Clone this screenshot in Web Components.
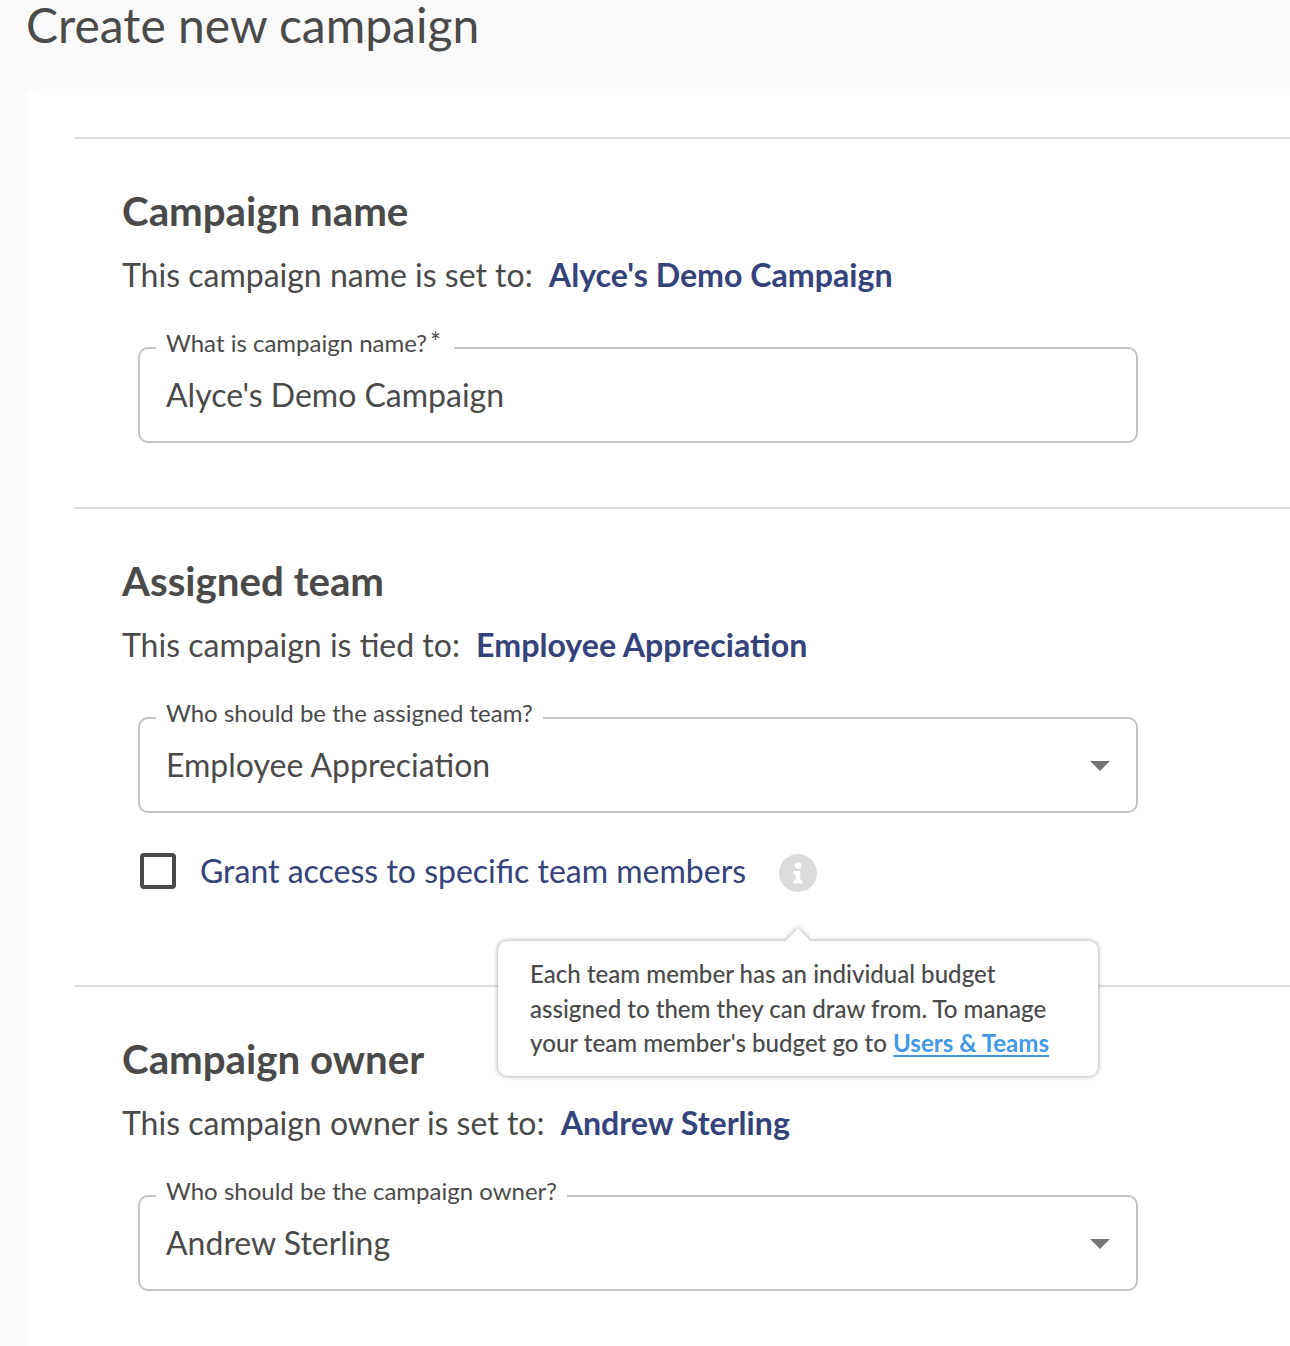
<!DOCTYPE html>
<html lang="en">
<head>
<meta charset="utf-8">
<title>Create new campaign</title>
<style>
  body {
    margin: 0;
    height: 1346px;
    overflow: hidden;
    background: #fafafa;
    color: #4a4a4a;
    font-family: Lato, sans-serif;
    font-size: 32px;
    --navy: #34437b;
    --line: #dcdcdc;
  }
</style>
</head>
<body>
<campaign-page heading="Create new campaign">
  <campaign-section heading="Campaign name" lead="This campaign name is set to:" value="Alyce's Demo Campaign">
    <outlined-field label="What is campaign name?" required>Alyce's Demo Campaign</outlined-field>
  </campaign-section>
  <campaign-section heading="Assigned team" lead="This campaign is tied to:" value="Employee Appreciation">
    <outlined-field label="Who should be the assigned team?" select>Employee Appreciation</outlined-field>
    <check-row>
      Grant access to specific team members
      <info-tip slot="info">Each team member has an individual budget assigned to them they can draw from. To manage your team member's budget go to <tip-link>Users &amp; Teams</tip-link></info-tip>
    </check-row>
  </campaign-section>
  <campaign-section heading="Campaign owner" lead="This campaign owner is set to:" value="Andrew Sterling">
    <outlined-field label="Who should be the campaign owner?" select>Andrew Sterling</outlined-field>
  </campaign-section>
</campaign-page>

<script>
class CampaignPage extends HTMLElement {
  connectedCallback() {
    this.attachShadow({ mode: 'open' }).innerHTML = `
      <style>
        :host {
          display: flex;
          flex-direction: column;
          height: 1346px;
          padding-left: 26px;
        }
        h1 {
          flex: none;
          margin: 0;
          height: 89px;
          font-size: 48px;
          font-weight: 400;
          line-height: 50px;
        }
        main {
          flex: 1;
          box-sizing: border-box;
          padding: 48px 0 0 48px;
          background: #fff;
          border-top-left-radius: 10px;
        }
      </style>
      <h1>${this.getAttribute('heading')}</h1>
      <main><slot></slot></main>
    `;
  }
}
customElements.define('campaign-page', CampaignPage);

class CampaignSection extends HTMLElement {
  connectedCallback() {
    this.attachShadow({ mode: 'open' }).innerHTML = `
      <style>
        :host {
          display: block;
          padding: 48px 0 64px 48px;
          border-top: 2px solid var(--line);
        }
        h2 {
          margin: 0;
          font-size: 40.25px;
          font-weight: 700;
          line-height: 48px;
        }
        p {
          margin: 20px 0 36px;
          line-height: 40px;
          white-space: nowrap;
        }
        b {
          margin-left: 8px;
          color: var(--navy);
          font-size: 32.15px;
          font-weight: 700;
        }
        .fields {
          width: 1000px;
          padding-left: 16px;
        }
      </style>
      <h2>${this.getAttribute('heading')}</h2>
      <p>${this.getAttribute('lead')} <b>${this.getAttribute('value')}</b></p>
      <div class="fields"><slot></slot></div>
    `;
  }
}
customElements.define('campaign-section', CampaignSection);

class OutlinedField extends HTMLElement {
  connectedCallback() {
    const mark = this.hasAttribute('required') ? '<span class="mark">*</span>' : '';
    const caret = this.hasAttribute('select')
      ? '<svg width="20" height="10" viewBox="0 0 20 10"><path d="M0 0h20L10 10z" fill="#757575"/></svg>'
      : '';
    this.attachShadow({ mode: 'open' }).innerHTML = `
      <style>
        :host { display: block; }
        fieldset {
          box-sizing: border-box;
          min-width: 0;
          margin: 0;
          padding: 0 26px 16px;
          border: 2px solid #c4c4c4;
          border-radius: 10px;
        }
        /* bottom padding lifts the text above the border line */
        legend {
          margin-left: -10px;
          padding: 0 10px 10px;
          font-size: 24px;
          line-height: 24px;
        }
        .mark {
          margin: 0 3px;
          font-size: 26px;
          line-height: 0;
        }
        .value {
          display: flex;
          align-items: center;
          justify-content: space-between;
          height: 60px;
          line-height: 60px;
        }
        svg { margin-top: 2px; }
      </style>
      <fieldset>
        <legend>${this.getAttribute('label')}${mark}</legend>
        <div class="value"><span><slot></slot></span>${caret}</div>
      </fieldset>
    `;
  }
}
customElements.define('outlined-field', OutlinedField);

class CheckRow extends HTMLElement {
  connectedCallback() {
    this.attachShadow({ mode: 'open' }).innerHTML = `
      <style>
        :host {
          display: flex;
          align-items: center;
          height: 40px;
          margin: 38px 0 30px;
          padding-left: 2px;
          color: var(--navy);
        }
        .box {
          box-sizing: border-box;
          width: 36px;
          height: 36px;
          margin-right: 24px;
          border: 4px solid #4a4a4a;
          border-radius: 4px;
        }
        .text { line-height: 40px; }
        slot[name=info] { display: block; margin: 4px 0 0 33px; }
      </style>
      <span class="box" role="checkbox" aria-checked="false"></span>
      <span class="text"><slot></slot></span>
      <slot name="info"></slot>
    `;
  }
}
customElements.define('check-row', CheckRow);

class InfoTip extends HTMLElement {
  connectedCallback() {
    this.attachShadow({ mode: 'open' }).innerHTML = `
      <style>
        :host {
          display: block;
          position: relative;
          width: 38px;
          height: 38px;
        }
        svg { display: block; }
        .tip {
          position: absolute;
          z-index: 1;
          top: 87px;
          left: -281px;
          box-sizing: border-box;
          width: 600px;
          padding: 16px 32px 15px;
          background: #fff;
          border-radius: 9px;
          box-shadow: 0 0 5px rgba(0, 0, 0, .4);
          color: #4a4a4a;
          font-size: 24.08px;
          font-weight: 500;
          line-height: 34.5px;
        }
        .arrow {
          position: absolute;
          top: -20px;
          left: 288px;
          width: 24px;
          height: 21px;
          overflow: hidden;
        }
        .arrow::before {
          content: '';
          position: absolute;
          top: 11px;
          left: 3px;
          width: 18px;
          height: 18px;
          background: #fff;
          box-shadow: 0 0 5px rgba(0, 0, 0, .4);
          transform: rotate(45deg);
        }
      </style>
      <svg width="38" height="38" viewBox="0 0 38 38">
        <circle cx="19" cy="19" r="19" fill="#dbdbdb"/>
        <circle cx="19" cy="11.6" r="3.2" fill="#fff"/>
        <path d="M14.500 17h6.800v9.200h2v3.300h-8.800v-3.300h2v-5.900h-2z" fill="#fff"/>
      </svg>
      <div class="tip" role="tooltip"><span class="arrow"></span><slot></slot></div>
    `;
  }
}
customElements.define('info-tip', InfoTip);

class TipLink extends HTMLElement {
  connectedCallback() {
    this.attachShadow({ mode: 'open' }).innerHTML = `
      <style>
        :host { display: inline; }
        a {
          color: #4399e6;
          font-weight: 700;
          text-decoration: underline;
          text-decoration-thickness: 2px;
          text-underline-offset: 3px;
          text-decoration-skip-ink: none;
        }
      </style>
      <a href="#"><slot></slot></a>
    `;
  }
}
customElements.define('tip-link', TipLink);
</script>
</body>
</html>
